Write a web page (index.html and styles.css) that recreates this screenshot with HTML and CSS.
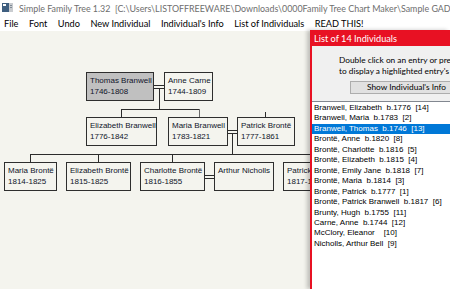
FILE: index.html
```html
<!DOCTYPE html>
<html>
<head>
<meta charset="utf-8">
<link rel="stylesheet" href="styles.css">
</head>
<body>
<div class="app">
  <div class="titlebar">
    <svg class="appicon" width="11" height="9" viewBox="0 0 11 9"><rect x="0" y="0" width="11" height="9" fill="#3f5f80"/><rect x="1" y="1" width="3" height="2" fill="#ffffff"/><rect x="7" y="0" width="4" height="9" fill="#c9ccd0"/><rect x="8" y="2" width="2" height="1" fill="#7f8a96"/><rect x="8" y="4" width="2" height="1" fill="#7f8a96"/></svg>
    <span class="title">Simple Family Tree 1.32&nbsp;&nbsp;[C:\Users\LISTOFFREEWARE\Downloads\0000Family Tree Chart Maker\Sample GADCOM.ged]</span>
  </div>
  <div class="menubar">
    <span class="mi">File</span><span class="mi">Font</span><span class="mi">Undo</span><span class="mi">New Individual</span><span class="mi">Individual's Info</span><span class="mi">List of Individuals</span><span class="mi">READ THIS!</span>
  </div>
  <div class="workspace">
    <div class="canvas">
      <svg class="lines" width="330" height="258" viewBox="0 0 330 258">
        <g stroke="#2b2b2b" stroke-width="1" fill="none" shape-rendering="crispEdges">
          <line x1="154" y1="54.5" x2="164" y2="54.5"/>
          <line x1="154" y1="57.5" x2="164" y2="57.5"/>
          <line x1="159.5" y1="57.5" x2="159.5" y2="78.5"/>
          <line x1="121" y1="78.5" x2="200" y2="78.5"/>
          <line x1="121.5" y1="78" x2="121.5" y2="86"/>
          <line x1="199.5" y1="78" x2="199.5" y2="86" stroke="#6a6a6a"/>
          <line x1="265.5" y1="81" x2="265.5" y2="86"/>
          <line x1="228" y1="99.5" x2="237" y2="99.5"/>
          <line x1="228" y1="102.5" x2="237" y2="102.5"/>
          <line x1="232.5" y1="102.5" x2="232.5" y2="123.5"/>
          <line x1="30" y1="123.5" x2="330" y2="123.5"/>
          <line x1="30.5" y1="123" x2="30.5" y2="131"/>
          <line x1="98.5" y1="123" x2="98.5" y2="131"/>
          <line x1="172.5" y1="123" x2="172.5" y2="131"/>
          <line x1="205" y1="144.5" x2="214" y2="144.5"/>
          <line x1="205" y1="147.5" x2="214" y2="147.5"/>
        </g>
      </svg>
      <div class="node sel" style="left:86px;top:41px;width:68px">Thomas Branwell<br>1746-1808</div>
      <div class="node" style="left:164px;top:41px;width:49px">Anne Carne<br>1744-1809</div>
      <div class="node" style="left:86px;top:86px;width:71px">Elizabeth Branwell<br>1776-1842</div>
      <div class="node" style="left:168px;top:86px;width:60px">Maria Branwell<br>1783-1821</div>
      <div class="node" style="left:237px;top:86px;width:58px">Patrick Brontë<br>1777-1861</div>
      <div class="node" style="left:4px;top:131px;width:53px">Maria Brontë<br>1814-1825</div>
      <div class="node" style="left:66px;top:131px;width:65px">Elizabeth Brontë<br>1815-1825</div>
      <div class="node" style="left:140px;top:131px;width:65px">Charlotte Brontë<br>1816-1855</div>
      <div class="node" style="left:214px;top:131px;width:60px">Arthur Nicholls</div>
      <div class="node" style="left:283px;top:131px;width:70px">Patrick Brontë<br>1817-1848</div>
    </div>
    <div class="listwin">
      <div class="lw-title">List of 14 Individuals</div>
      <div class="lw-body">
        <div class="lw-help">Double click on an entry or press Enter<br>to display a highlighted entry's family</div>
        <div class="lw-btnrow"><button class="lw-btn">Show Individual's Info</button></div>
        <div class="lw-list">
          <div class="li">Branwell, Elizabeth  b.1776  [14]</div>
          <div class="li">Branwell, Maria  b.1783  [2]</div>
          <div class="li on">Branwell, Thomas  b.1746  [13]</div>
          <div class="li">Brontë, Anne  b.1820  [8]</div>
          <div class="li">Brontë, Charlotte  b.1816  [5]</div>
          <div class="li">Brontë, Elizabeth  b.1815  [4]</div>
          <div class="li">Brontë, Emily Jane  b.1818  [7]</div>
          <div class="li">Brontë, Maria  b.1814  [3]</div>
          <div class="li">Brontë, Patrick  b.1777  [1]</div>
          <div class="li">Brontë, Patrick Branwell  b.1817  [6]</div>
          <div class="li">Brunty, Hugh  b.1755  [11]</div>
          <div class="li">Carne, Anne  b.1744  [12]</div>
          <div class="li">McClory, Eleanor    [10]</div>
          <div class="li">Nicholls, Arthur Bell  [9]</div>
        </div>
      </div>
    </div>
  </div>
</div>
</body>
</html>
```

FILE: styles.css
```css
* { box-sizing: border-box; }
html, body { margin: 0; padding: 0; }
body {
  width: 450px;
  height: 289px;
  overflow: hidden;
  background: #ffffff;
  font-family: Lato, "Open Sans", sans-serif;
}
.app { width: 450px; height: 289px; display: flex; flex-direction: column; overflow: hidden; }
.titlebar {
  height: 16px;
  display: flex;
  align-items: center;
  padding-left: 2px;
  background: #ffffff;
  white-space: nowrap;
  overflow: hidden;
}
.appicon { flex: none; margin-right: 6px; margin-top: -1px; }
.title { font-size: 8.9px; color: #6e6e6e; }
.menubar {
  height: 14px;
  display: flex;
  align-items: center;
  gap: 10.5px;
  padding: 1px 0 0 4px;
  font-size: 9.2px;
  color: #000;
  background: #ffffff;
  white-space: nowrap;
}
.workspace { flex: 1; display: flex; min-height: 0; }
.canvas {
  position: relative;
  width: 310px;
  flex: none;
  background: #f4f4ee;
  margin-top: 1px;
  overflow: hidden;
}
.lines { position: absolute; left: 0; top: 0; }
.node {
  position: absolute;
  height: 29px;
  border: 1px solid #2e2e2e;
  background: #f4f4ee;
  padding: 3px 0 0 3px;
  font-family: "Liberation Sans", Arial, sans-serif;
  font-size: 8px;
  line-height: 10.5px;
  color: #10142a;
  white-space: nowrap;
  overflow: hidden;
}
.node.sel { background: #c0c0c0; }
.listwin {
  flex: 1;
  display: flex;
  flex-direction: column;
  border-left: 2px solid #e81123;
  box-shadow: -3px 0 4px rgba(0, 0, 0, 0.22);
  background: #f0f0f0;
  position: relative;
  z-index: 2;
  overflow: hidden;
}
.lw-title {
  height: 16px;
  background: #e81123;
  color: #fff;
  font-size: 9.2px;
  line-height: 17px;
  padding-left: 2px;
  white-space: nowrap;
}
.lw-body { flex: 1; display: flex; flex-direction: column; overflow: hidden; }
.lw-help {
  padding: 9px 0 0 27px;
  font-size: 8.3px;
  line-height: 10.5px;
  white-space: nowrap;
  color: #000;
}
.lw-btnrow { padding: 5px 0 0 38px; height: 25px; }
.lw-btn {
  display: block;
  width: 113px;
  height: 13px;
  padding: 0;
  border: 1px solid #adadad;
  background: #e1e1e1;
  font-family: Lato, "Open Sans", sans-serif;
  font-size: 8.3px;
  line-height: 11px;
  color: #000;
  text-align: center;
  white-space: nowrap;
}
.lw-list {
  flex: 1;
  background: #ffffff;
  border-top: 1px solid #828790;
  padding-top: 1px;
  font-family: "Liberation Sans", Arial, sans-serif;
  font-size: 8px;
  color: #000;
}
.li {
  height: 10.46px;
  line-height: 10.46px;
  padding-left: 2px;
  white-space: pre;
}
.li.on { background: #0078d7; color: #fff; }
```
